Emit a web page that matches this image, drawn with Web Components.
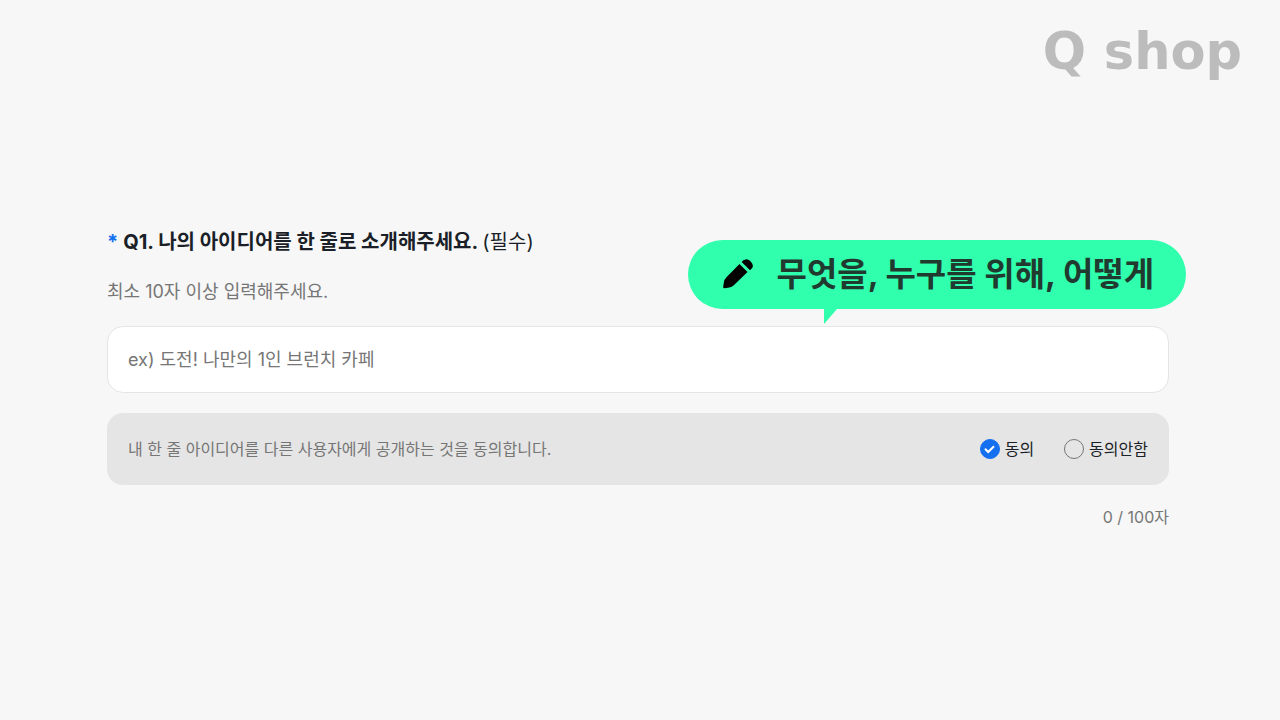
<!DOCTYPE html>
<html lang="ko">
<head>
<meta charset="utf-8">
<meta name="viewport" content="width=device-width, initial-scale=1">
<title>Q shop</title>
<style>
  body { margin: 0; background: #f7f7f7; color: #1b1f27; font-family: Inter, "Noto Sans CJK KR", sans-serif; }
</style>
</head>
<body>
<idea-page>
  <brand-logo slot="brand">Q shop</brand-logo>
  <idea-question></idea-question>
</idea-page>

<script>
const define = (name, html, setup) => {
  const template = document.createElement('template');
  template.innerHTML = html;
  customElements.define(name, class extends HTMLElement {
    constructor() {
      super();
      this.attachShadow({ mode: 'open' }).append(template.content.cloneNode(true));
      if (setup) setup(this.shadowRoot, this);
    }
  });
};

define('idea-page', `
  <style>
    :host { display: block; min-height: 100vh; box-sizing: border-box; }
    header { display: flex; justify-content: flex-end; padding: 24px 38px 0; }
    main { padding: 146px 111px 40px 107px; }
  </style>
  <header><slot name="brand"></slot></header>
  <main><slot></slot></main>`);

define('brand-logo', `
  <style>
    :host { display: block; color: #bcbcbc; font: bold 51px/56px "DejaVu Sans", sans-serif; }
  </style>
  <slot></slot>`);

define('hint-bubble', `
  <style>
    :host { display: block; }
    .pill { position: relative; display: flex; align-items: center; gap: 24px; height: 69px; padding: 0 32px 2px 35px;
      box-sizing: border-box; border-radius: 35px; background: #30ffad; color: #213a30;
      font-size: 33px; font-weight: 700; line-height: 48px; white-space: nowrap; }
    .icon { width: 30px; height: 30px; flex: none; }
    .tail { position: absolute; left: 136px; top: 100%; width: 14px; height: 15px; display: block; }
  </style>
  <div class="pill">
    <svg class="icon" viewBox="0 0 30 30" aria-hidden="true">
      <path d="M16.5 5 24.5 13 10.5 26.5Q8.5 28.5 5 28.8L1.5 29.2Q0 29.2 0.2 27.7L1 22.8Q1.4 20.3 3.2 18.4Z"/>
      <path d="M18.7 2.9Q20 .8 22.6.4Q25.2.1 27.5 2.3Q29.8 4.7 29.8 7.2Q29.7 9.5 27 11.3Z"/>
    </svg>
    <slot></slot>
    <svg class="tail" viewBox="0 0 14 15" aria-hidden="true"><path d="M0 0H13L0 15Z" fill="#30ffad"/></svg>
  </div>`);

define('consent-choice', `
  <style>
    :host { display: flex; align-items: center; justify-content: space-between; gap: 24px; min-height: 72px;
      padding: 0 21px; box-sizing: border-box; border-radius: 16px; background: #e5e5e5;
      font-size: 16px; line-height: 24px; }
    p { margin: 0; color: #767676; }
    .options { display: flex; gap: 30px; }
    label { display: flex; align-items: center; gap: 5px; white-space: nowrap; }
    .mark { display: grid; width: 20px; height: 20px; }
    .mark > * { grid-area: 1 / 1; }
    input { appearance: none; width: 20px; height: 20px; margin: 0; box-sizing: border-box;
      border: 1px solid #767676; border-radius: 50%; }
    input:checked { background: #1570ef; border-color: #1570ef; }
    svg { width: 20px; height: 20px; pointer-events: none; visibility: hidden; }
    input:checked + svg { visibility: visible; }
    path { fill: none; stroke: #fff; stroke-width: 2; }
  </style>
  <p id="text"><slot></slot></p>
  <div class="options" role="radiogroup" aria-labelledby="text">
    <label for="yes"><span class="mark"><input type="radio" id="yes" name="consent" checked><svg viewBox="0 0 20 20" aria-hidden="true"><path d="M5 9.8 8.2 13 14 7.2"/></svg></span>동의</label>
    <label for="no"><span class="mark"><input type="radio" id="no" name="consent"><svg viewBox="0 0 20 20" aria-hidden="true"><path d="M5 9.8 8.2 13 14 7.2"/></svg></span>동의안함</label>
  </div>`);

define('idea-question', `
  <style>
    :host { display: block; position: relative; }
    h1 { margin: 0; font-size: 20px; font-weight: 700; line-height: 32px; }
    h1 .star { color: #1570ef; margin-right: 5px; }
    h1 .need { font-weight: 400; }
    .help { margin: 18px 0; color: #767676; font-size: 18px; line-height: 32px; }
    input { display: block; width: 100%; height: 67px; margin: 0 0 20px; padding: 0 20px; box-sizing: border-box;
      border: 1px solid #e5e5e5; border-radius: 16px; background: #fff; color: inherit;
      font-family: inherit; font-size: 18px; }
    input::placeholder { color: #767676; opacity: 1; }
    .count { display: block; margin-top: 20px; text-align: right; color: #767676; font-size: 16px; line-height: 24px; }
    hint-bubble { position: absolute; top: 14px; right: -17px; }
  </style>
  <h1><label for="idea"><span class="star">*</span>Q1. 나의 아이디어를 한 줄로 소개해주세요. <span class="need">(필수)</span></label></h1>
  <p class="help" id="help">최소 10자 이상 입력해주세요.</p>
  <input type="text" id="idea" maxlength="100" required aria-describedby="help" placeholder="ex) 도전! 나만의 1인 브런치 카페">
  <consent-choice>내 한 줄 아이디어를 다른 사용자에게 공개하는 것을 동의합니다.</consent-choice>
  <output class="count" for="idea">0 / 100자</output>
  <hint-bubble>무엇을, 누구를 위해, 어떻게</hint-bubble>`,
  root => {
    const field = root.querySelector('#idea');
    field.addEventListener('input', () => {
      root.querySelector('.count').textContent = field.value.length + ' / 100자';
    });
  });
</script>
</body>
</html>
